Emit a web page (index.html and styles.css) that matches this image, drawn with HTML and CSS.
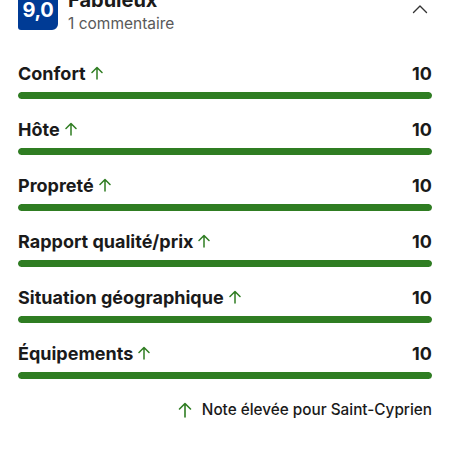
FILE: index.html
```html
<!DOCTYPE html>
<html lang="fr">
<head>
<meta charset="utf-8">
<link rel="stylesheet" href="styles.css">
</head>
<body>
<div class="page">
  <header class="head">
    <div class="badge">9,0</div>
    <div class="head-text">
      <div class="title">Fabuleux</div>
      <div class="count">1 commentaire</div>
    </div>
    <svg class="chev" width="16" height="10" viewBox="0 0 16 10"><path d="M1.5 8.5 L8 2 L14.5 8.5" fill="none" stroke="#333" stroke-width="1.4" stroke-linecap="round" stroke-linejoin="round"/></svg>
  </header>

  <div class="rows">
    <div class="row">
      <div class="row-top"><span class="label">Confort<svg class="up" width="12" height="14" viewBox="0 0 12 14"><path d="M6 13 V1.5 M1 6.5 L6 1.5 L11 6.5" fill="none" stroke="#2f7d22" stroke-width="1.5" stroke-linecap="round" stroke-linejoin="round"/></svg></span><span class="score">10</span></div>
      <div class="bar"><div class="fill" style="width:100%"></div></div>
    </div>
    <div class="row">
      <div class="row-top"><span class="label">Hôte<svg class="up" width="12" height="14" viewBox="0 0 12 14"><path d="M6 13 V1.5 M1 6.5 L6 1.5 L11 6.5" fill="none" stroke="#2f7d22" stroke-width="1.5" stroke-linecap="round" stroke-linejoin="round"/></svg></span><span class="score">10</span></div>
      <div class="bar"><div class="fill" style="width:100%"></div></div>
    </div>
    <div class="row">
      <div class="row-top"><span class="label">Propreté<svg class="up" width="12" height="14" viewBox="0 0 12 14"><path d="M6 13 V1.5 M1 6.5 L6 1.5 L11 6.5" fill="none" stroke="#2f7d22" stroke-width="1.5" stroke-linecap="round" stroke-linejoin="round"/></svg></span><span class="score">10</span></div>
      <div class="bar"><div class="fill" style="width:100%"></div></div>
    </div>
    <div class="row">
      <div class="row-top"><span class="label">Rapport qualité/prix<svg class="up" width="12" height="14" viewBox="0 0 12 14"><path d="M6 13 V1.5 M1 6.5 L6 1.5 L11 6.5" fill="none" stroke="#2f7d22" stroke-width="1.5" stroke-linecap="round" stroke-linejoin="round"/></svg></span><span class="score">10</span></div>
      <div class="bar"><div class="fill" style="width:100%"></div></div>
    </div>
    <div class="row">
      <div class="row-top"><span class="label">Situation géographique<svg class="up" width="12" height="14" viewBox="0 0 12 14"><path d="M6 13 V1.5 M1 6.5 L6 1.5 L11 6.5" fill="none" stroke="#2f7d22" stroke-width="1.5" stroke-linecap="round" stroke-linejoin="round"/></svg></span><span class="score">10</span></div>
      <div class="bar"><div class="fill" style="width:100%"></div></div>
    </div>
    <div class="row">
      <div class="row-top"><span class="label">Équipements<svg class="up" width="12" height="14" viewBox="0 0 12 14"><path d="M6 13 V1.5 M1 6.5 L6 1.5 L11 6.5" fill="none" stroke="#2f7d22" stroke-width="1.5" stroke-linecap="round" stroke-linejoin="round"/></svg></span><span class="score">10</span></div>
      <div class="bar"><div class="fill" style="width:100%"></div></div>
    </div>
  </div>

  <div class="note"><svg class="up-note" width="14" height="16" viewBox="0 0 14 16"><path d="M7 15 V1.5 M1.5 7 L7 1.5 L12.5 7" fill="none" stroke="#2f7d22" stroke-width="1.6" stroke-linecap="round" stroke-linejoin="round"/></svg><span>Note élevée pour Saint-Cyprien</span></div>
</div>
</body>
</html>
```
FILE: styles.css
```css
html, body {
  margin: 0;
  padding: 0;
  background: #ffffff;
}
body {
  font-family: Inter, "Noto Sans", "Liberation Sans", sans-serif;
  color: #1a1a1a;
  overflow: hidden;
}
.page {
  padding: 0 18px;
}
.head {
  display: flex;
  align-items: flex-start;
  margin-top: -10px;
}
.badge {
  width: 40px;
  height: 40px;
  background: #003b95;
  color: #fff;
  border-radius: 6px 6px 6px 3px;
  font-weight: 700;
  font-size: 20px;
  text-align: center;
  letter-spacing: -0.3px;
  padding-top: 5px;
  box-sizing: border-box;
  line-height: 30px;
}
.head-text {
  flex: 1;
  margin-left: 10px;
}
.title {
  font-size: 20px;
  font-weight: 700;
  line-height: 20px;
}
.count {
  font-size: 15.5px;
  color: #595959;
  line-height: 20px;
  margin-top: 4px;
}
.chev {
  margin-top: 14px;
  margin-right: 4px;
}
.rows {
  margin-top: 28px;
}
.row {
  padding-bottom: 19px;
}
.row-top {
  display: flex;
  justify-content: space-between;
  align-items: center;
  height: 22px;
  font-size: 18px;
  font-weight: 700;
}
.label {
  display: flex;
  align-items: center;
}
.up {
  margin-left: 5px;
}
.bar {
  margin-top: 8px;
  height: 7px;
  border-radius: 4px;
  background: #e7e7e7;
  overflow: hidden;
}
.fill {
  height: 100%;
  background: #2f7d22;
  border-radius: 4px;
}
.note {
  display: flex;
  justify-content: flex-end;
  align-items: center;
  font-size: 15.3px;
  line-height: 20px;
  font-weight: 500;
  margin-top: 2px;
}
.up-note {
  margin-right: 10px;
}
```
